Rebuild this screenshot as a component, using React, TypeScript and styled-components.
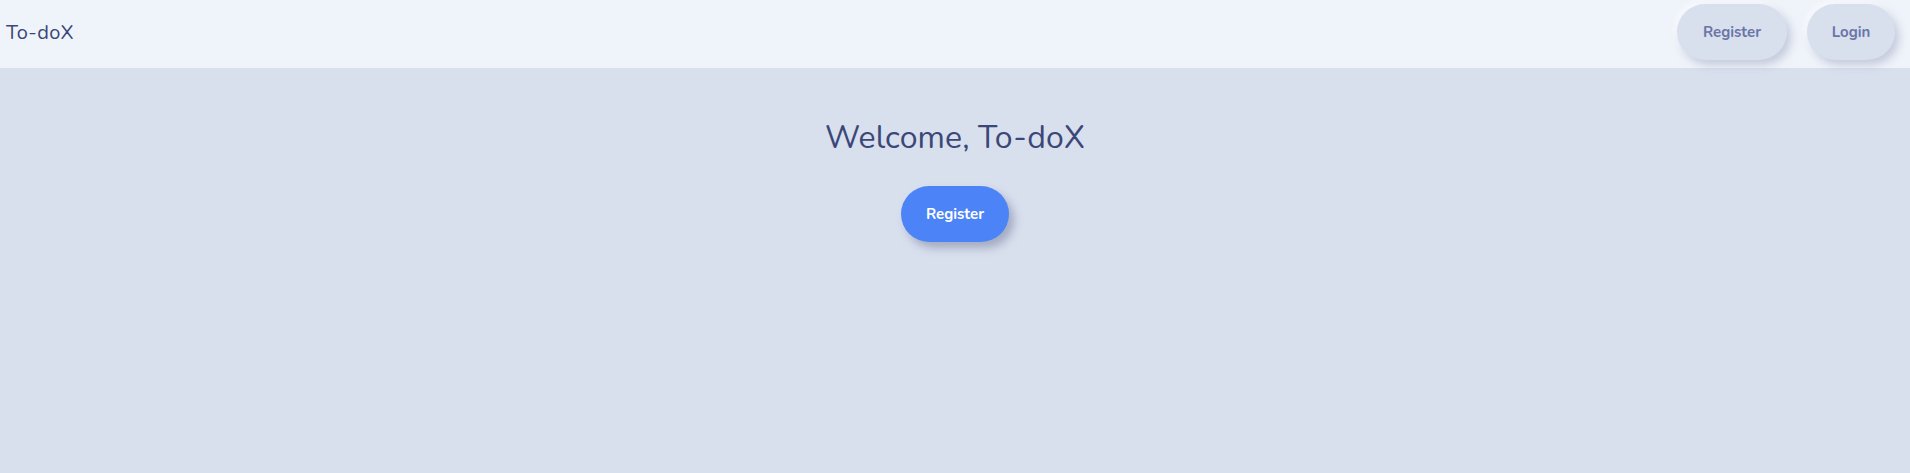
import React from "react";
import styled, { createGlobalStyle } from "styled-components";

const GlobalStyle = createGlobalStyle`
  html, body { margin: 0; padding: 0; }
  body {
    background: #d8dfed;
    font-family: "Nunito", "Lato", "Noto Sans", sans-serif;
    min-height: 473px;
  }
`;

const Page = styled.div`
  min-height: 473px;
  background: #d8dfed;
`;

const Header = styled.header`
  height: 68px;
  box-sizing: border-box;
  background: #eff3fa;
  display: flex;
  align-items: center;
  justify-content: space-between;
  padding: 0 15px 4px 6px;
`;

const Logo = styled.div`
  font-size: 20px;
  color: #3b4778;
  letter-spacing: 0.2px;
`;

const Nav = styled.nav`
  display: flex;
  gap: 20px;
`;

const NavButton = styled.button<{ $w: number }>`
  width: ${(p) => p.$w}px;
  height: 56px;
  border: none;
  border-radius: 28px;
  background: #d8dfed;
  color: #6a75a8;
  font-family: inherit;
  font-weight: 700;
  font-size: 15px;
  box-shadow: 4px 5px 8px rgba(160, 170, 195, 0.55), -3px -3px 6px rgba(255, 255, 255, 0.6);
  cursor: pointer;
`;

const Main = styled.main`
  display: flex;
  flex-direction: column;
  align-items: center;
  padding-top: 48px;
`;

const Title = styled.h1`
  margin: 0;
  font-weight: 400;
  font-size: 32px;
  color: #3b4778;
  letter-spacing: 0.1px;
`;

const PrimaryButton = styled.button`
  margin-top: 27px;
  width: 108px;
  height: 56px;
  border: none;
  border-radius: 28px;
  background: #4c84f7;
  color: #ffffff;
  font-family: inherit;
  font-weight: 700;
  font-size: 15px;
  box-shadow: 5px 6px 9px rgba(120, 130, 160, 0.55);
  cursor: pointer;
`;

export default function App() {
  return (
    <Page>
      <GlobalStyle />
      <Header>
        <Logo>To-doX</Logo>
        <Nav>
          <NavButton $w={110}>Register</NavButton>
          <NavButton $w={88}>Login</NavButton>
        </Nav>
      </Header>
      <Main>
        <Title>Welcome, To-doX</Title>
        <PrimaryButton>Register</PrimaryButton>
      </Main>
    </Page>
  );
}
